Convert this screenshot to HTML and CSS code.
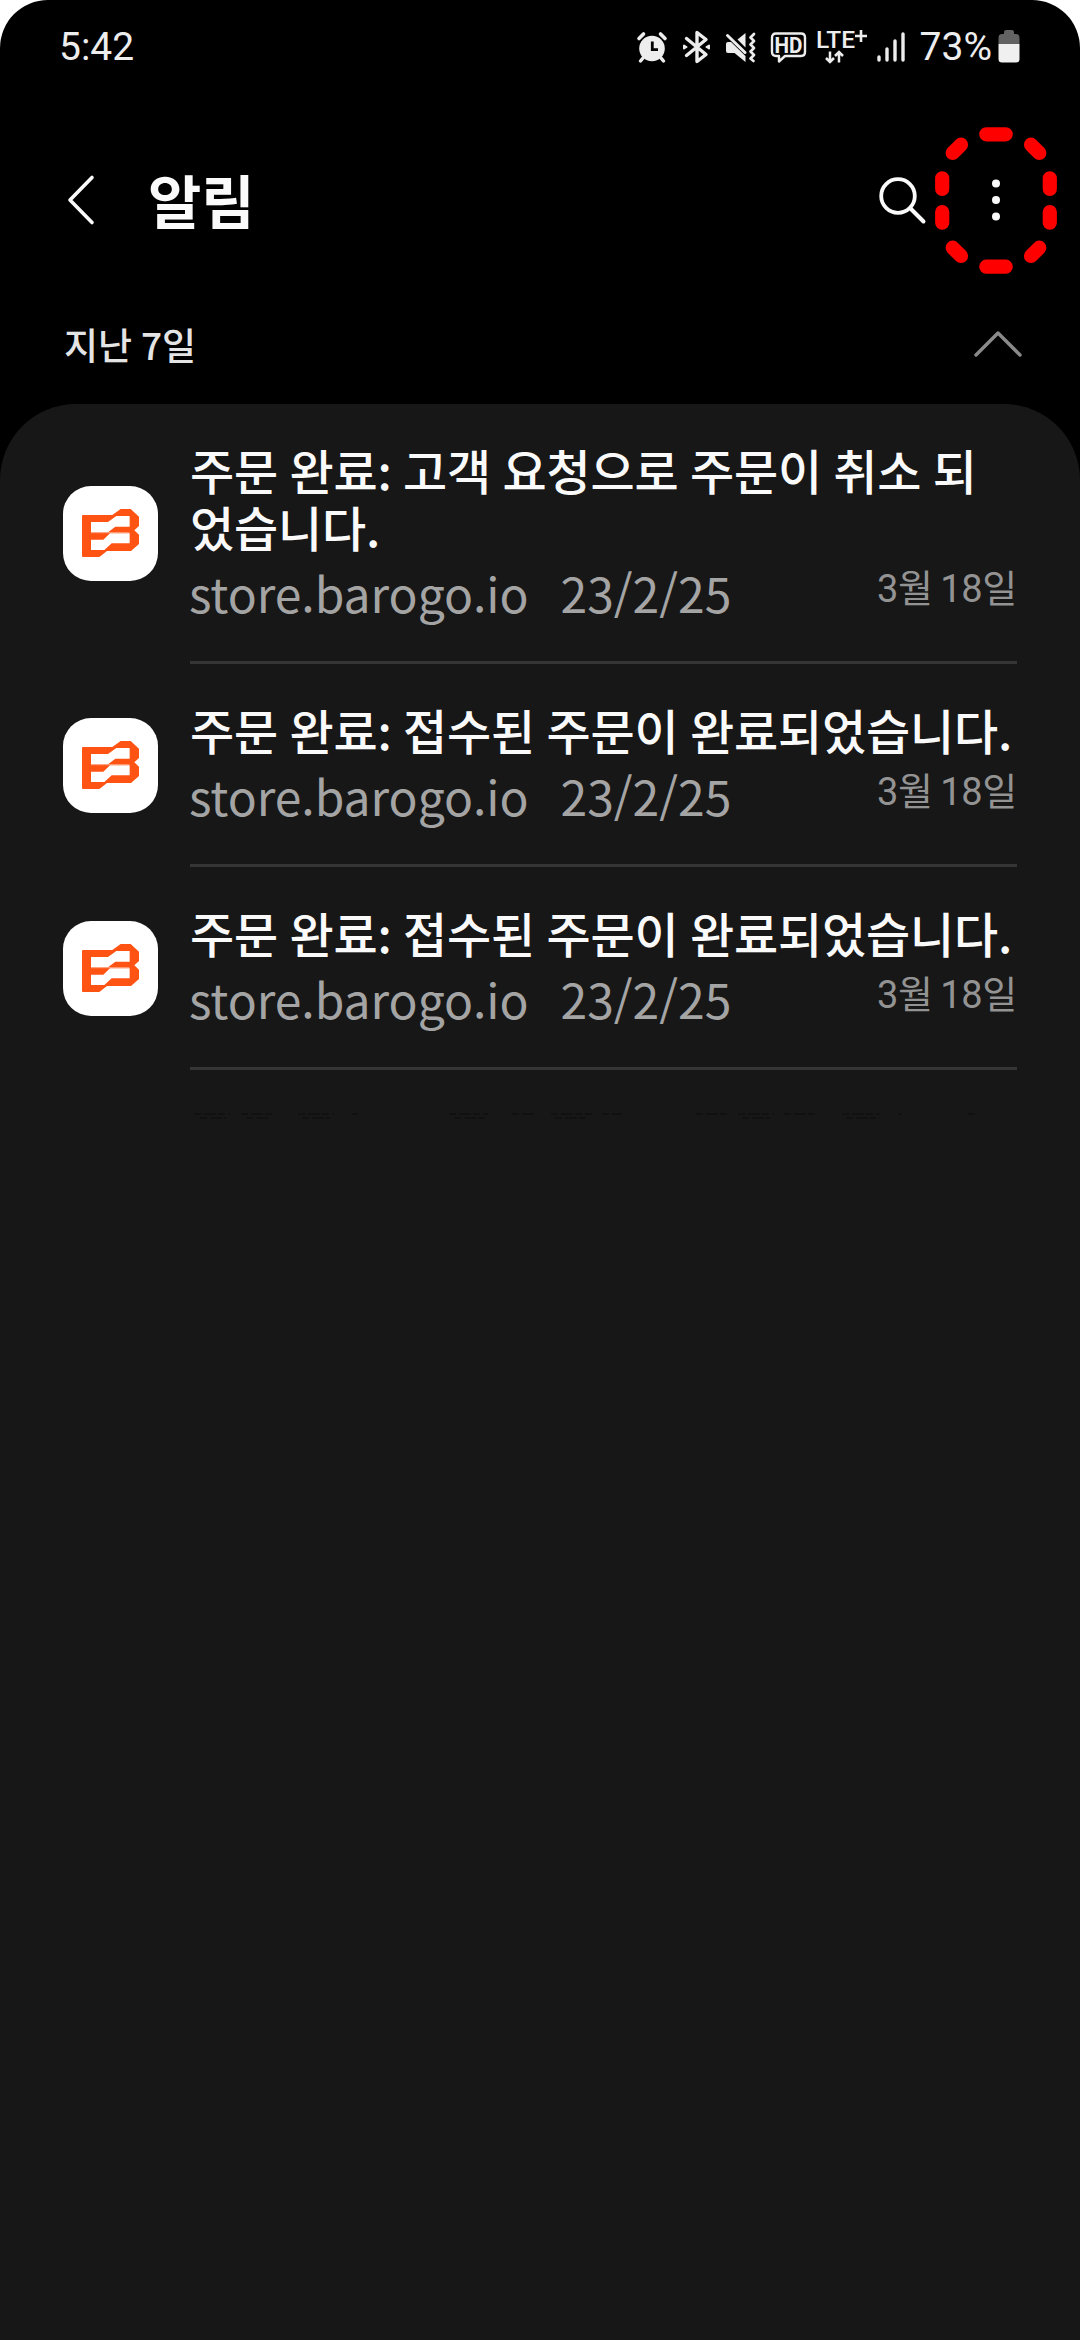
FILE: index.html
```html
<!DOCTYPE html>
<html lang="ko">
<head>
<meta charset="utf-8">
<title>알림</title>
<link rel="stylesheet" href="styles.css">
</head>
<body>
<svg class="defs" width="0" height="0" aria-hidden="true">
  <symbol id="logo" viewBox="39 48 285 285">
    <path fill="#ff5314" fill-rule="evenodd" d="M96 138Q96 135 99 135H187L212 117H242L267 140V168L253 181L267 194V222L243 243H171L148 261H99Q96 261 96 258ZM123 156V187H174L196 170H239V138H199L174 156ZM123 209V240H163L185 220H239V190H180L160 209Z"/>
    <path stroke="#ffb598" stroke-width="2.5" d="M123 188H238"/>
  </symbol>
</svg>
<div class="screen">
  <div class="statusbar">
    <span class="clock">5:42</span>
    <div class="status-icons">
      <svg class="i-alarm" width="30" height="32" viewBox="0 0 30 32">
        <circle cx="15" cy="17.5" r="12.8" fill="#ededed"/>
        <path d="M2 7.5L6.5 3M23.500 3L28 7.500" stroke="#ededed" stroke-width="3.600" stroke-linecap="round"/>
        <path d="M6 27L3.500 30M24 27L26.500 30" stroke="#ededed" stroke-width="3.400" stroke-linecap="round"/>
        <path d="M15.300 10.500V18.600H21" fill="none" stroke="#000" stroke-width="2.800"/>
      </svg>
      <svg class="i-bt" width="30" height="34" viewBox="0 0 30 34" fill="none" stroke="#ededed" stroke-width="3.400" stroke-linejoin="round" stroke-linecap="round">
        <path d="M4.500 8.500L24 24.500L15 31.500V2.500L24 9.500L4.500 25.500"/>
        <path d="M2 15.500L4.500 17L2 18.500ZM27 15.500L24.500 17L27 18.500Z" stroke-width="2"/>
      </svg>
      <svg class="i-mute" width="32" height="32" viewBox="0 0 32 32">
        <path fill="#ededed" d="M12.500 8.500L20.500 2V16.500Z"/>
        <path fill="#ededed" d="M1 13Q1 11 3 11H6L20.500 25V31L9.500 22H3Q1 22 1 20Z"/>
        <path d="M2.500 4.500L20 21.500" stroke="#ededed" stroke-width="3" stroke-linecap="round"/>
        <path d="M29 3L25.500 6.500L29 10L25.500 13.500L29 17L25.500 20.500L29 24L25.500 27.500L28.500 30" fill="none" stroke="#ededed" stroke-width="2.700" stroke-linejoin="round" stroke-linecap="round"/>
      </svg>
      <svg class="i-hd" width="38" height="34" viewBox="0 0 38 34">
        <path d="M6 3.500H31Q35 3.500 35 7.500V22Q35 26 31 26H15L9 31.500V26H6Q2 26 2 22V7.500Q2 3.500 6 3.500Z" fill="none" stroke="#ededed" stroke-width="2.400" stroke-linejoin="round"/>
        <text x="4.500" y="22.800" class="tiny bold" font-size="22" textLength="28" lengthAdjust="spacingAndGlyphs">HD</text>
      </svg>
      <svg class="i-lte" width="52" height="36" viewBox="0 0 52 36">
        <text x="0" y="19" class="tiny" font-size="24" textLength="39" lengthAdjust="spacingAndGlyphs">LTE</text>
        <path d="M39 7H51M45 1V13" stroke="#ededed" stroke-width="2.600"/>
        <path d="M14 22.500V32.500M10 29L14 33L18 29M23 33.500V23.500M19 27L23 23L27 27" fill="none" stroke="#ededed" stroke-width="2.500"/>
      </svg>
      <svg class="i-signal" width="28" height="30" viewBox="0 0 28 30" stroke="#ededed" stroke-width="3.400" stroke-linecap="round">
        <path d="M2 25V28M10 17V28M18 9V28M26 2V28"/>
      </svg>
      <span class="percent">73%</span>
      <svg class="i-battery" width="22" height="34" viewBox="0 0 22 34">
        <path fill="#636363" d="M7 1Q7 0 8 0H14Q16 0 16 2V4H18Q21.500 4 21.500 8V14H.5V8Q.5 4 4 4H6V2Q6 0 8 0Z"/>
        <path fill="#f0f0f0" d="M.5 14H21.500V29Q21.500 32.500 18 32.500H4Q.5 32.500 .5 29Z"/>
      </svg>
    </div>
  </div>

  <header class="appbar">
    <svg class="i-back" width="28" height="50" viewBox="0 0 28 50" fill="none" stroke="#fafafa" stroke-width="3.600" stroke-linecap="round" stroke-linejoin="round">
      <path d="M25 2.500L3 25L25 47.500"/>
    </svg>
    <h1 class="title">알림</h1>
    <svg class="i-search" width="48" height="48" viewBox="0 0 48 48" fill="none" stroke="#fafafa" stroke-linecap="round">
      <circle cx="19" cy="20" r="16.800" stroke-width="3.800"/>
      <path d="M31.500 32.500L44.500 45.500" stroke-width="4"/>
    </svg>
    <div class="more">
      <svg class="dots" width="10" height="42" viewBox="0 0 10 42" fill="#fafafa">
        <circle cx="5" cy="4.500" r="4"/><circle cx="5" cy="21" r="4"/><circle cx="5" cy="37.500" r="4"/>
      </svg>
      <svg class="ring" width="124" height="148" viewBox="0 0 124 148" stroke="#f00" stroke-width="14.200" stroke-linecap="round">
        <path d="M52.300 8.300H71.700M97 18.700L105.300 27M115.800 52.300V63M115.800 86V96.700M105.300 121.700L97 130M71.700 140.700H52.300M27 130L18.700 121.700M8.200 96.700V86M8.200 63V52.300M18.700 27L27 18.700"/>
      </svg>
    </div>
  </header>

  <div class="section">
    <h2 class="section-title">지난 7일</h2>
    <svg class="i-up" width="50" height="28" viewBox="0 0 50 28" fill="none" stroke="#8a8a8a" stroke-width="3.400" stroke-linecap="round" stroke-linejoin="round">
      <path d="M3 25L25 3L47 25"/>
    </svg>
  </div>

  <main class="panel">
    <article class="row">
      <div class="app"><svg width="95" height="95"><use href="#logo"/></svg></div>
      <div class="body">
        <p class="message">주문 완료: 고객 요청으로 주문이 취소 되<br>었습니다.</p>
        <div class="meta"><span class="source">store.barogo.io</span><span class="order">23/2/25</span><time class="date">3월 18일</time></div>
      </div>
    </article>
    <article class="row">
      <div class="app"><svg width="95" height="95"><use href="#logo"/></svg></div>
      <div class="body">
        <p class="message">주문 완료: 접수된 주문이 완료되었습니다.</p>
        <div class="meta"><span class="source">store.barogo.io</span><span class="order">23/2/25</span><time class="date">3월 18일</time></div>
      </div>
    </article>
    <article class="row">
      <div class="app"><svg width="95" height="95"><use href="#logo"/></svg></div>
      <div class="body">
        <p class="message">주문 완료: 접수된 주문이 완료되었습니다.</p>
        <div class="meta"><span class="source">store.barogo.io</span><span class="order">23/2/25</span><time class="date">3월 18일</time></div>
      </div>
    </article>
    <svg class="edge" width="790" height="8" viewBox="0 0 790 8" fill="none" stroke="#111" stroke-width="2">
      <path stroke-dasharray="7 3 12 2" d="M4 2H40M51 2H82M108 2H144M162 2H168M259 2H298M322 2H344M361 2H402M412 2H432M506 2H538M548 2H584M594 2H627M652 2H690M708 2H712M778 2H786M10 6H36M56 6H80M112 6H140M264 6H294M365 6H398M552 6H580M656 6H686"/>
    </svg>
  </main>
</div>
</body>
</html>
```
FILE: styles.css
```css
* { box-sizing: border-box; margin: 0; padding: 0; }
body { background: #fff; font-family: "Noto Sans CJK KR", sans-serif; }
svg { display: block; flex: none; overflow: visible; }
.defs { position: absolute; }
.screen {
  width: 1080px;
  height: 2340px;
  display: flex;
  flex-direction: column;
  background: #000;
  border-radius: 48px 48px 0 0;
  overflow: hidden;
}

.statusbar {
  height: 94px;
  padding: 0 60px 0 59px;
  display: flex;
  justify-content: space-between;
  align-items: center;
  font: 39px/1.2 Roboto, sans-serif;
  color: #ededed;
}
.status-icons { display: flex; align-items: center; }
.i-bt { margin-left: 15px; }
.i-mute { margin-left: 13px; }
.i-hd { margin-left: 13px; }
.i-lte { margin-left: 8px; }
.i-signal { margin-left: 9px; }
.percent { margin-left: 15px; }
.i-battery { margin-left: 6px; }
.tiny { font-family: Roboto, sans-serif; font-weight: 500; fill: #ededed; }
.bold { font-weight: 700; }

.appbar {
  height: 211px;
  padding: 0 79px 0 67px;
  display: flex;
  align-items: center;
}
.title { margin: -2px 0 0 53px; font-size: 58px; font-weight: 700; line-height: 84px; color: #fafafa; }
.i-search { margin-left: auto; }
.more { position: relative; margin-left: 64px; }
.ring { position: absolute; left: -57px; top: -53px; }

.section {
  height: 99px;
  padding: 0 57px 22px 64px;
  display: flex;
  align-items: center;
  justify-content: space-between;
}
.section-title { font-size: 37px; font-weight: 500; line-height: 54px; word-spacing: -1.5px; color: #e4e4e4; }

.panel { flex: 1; background: #171717; border-radius: 76px 76px 0 0; }
.row { display: flex; align-items: center; padding: 0 63px; }
.app { flex: none; width: 95px; height: 95px; margin-top: -1px; border-radius: 28px; background: #fff; }
.body { flex: 1; min-width: 0; margin-left: 32px; padding: 37px 0 34px; border-bottom: 3px solid #353535; }
.message {
  font-size: 48px;
  font-weight: 500;
  line-height: 57px;
  letter-spacing: -.16px;
  word-spacing: .8px;
  font-feature-settings: "calt" 0, "locl" 0;
  color: #fafafa;
  white-space: nowrap;
}
.meta { height: 72px; display: flex; color: #a4a4a4; line-height: 74px; letter-spacing: -.04px; }
.source, .order { font-size: 48px; }
.source { margin-left: -1px; }
.order { margin-left: 32px; }
.date { margin-left: auto; font-size: 38px; font-family: Roboto, "Noto Sans CJK KR", sans-serif; line-height: 68px; letter-spacing: -.3px; word-spacing: -1.5px; color: #939393; }
.edge { margin: 42px 0 0 190px; }
```
